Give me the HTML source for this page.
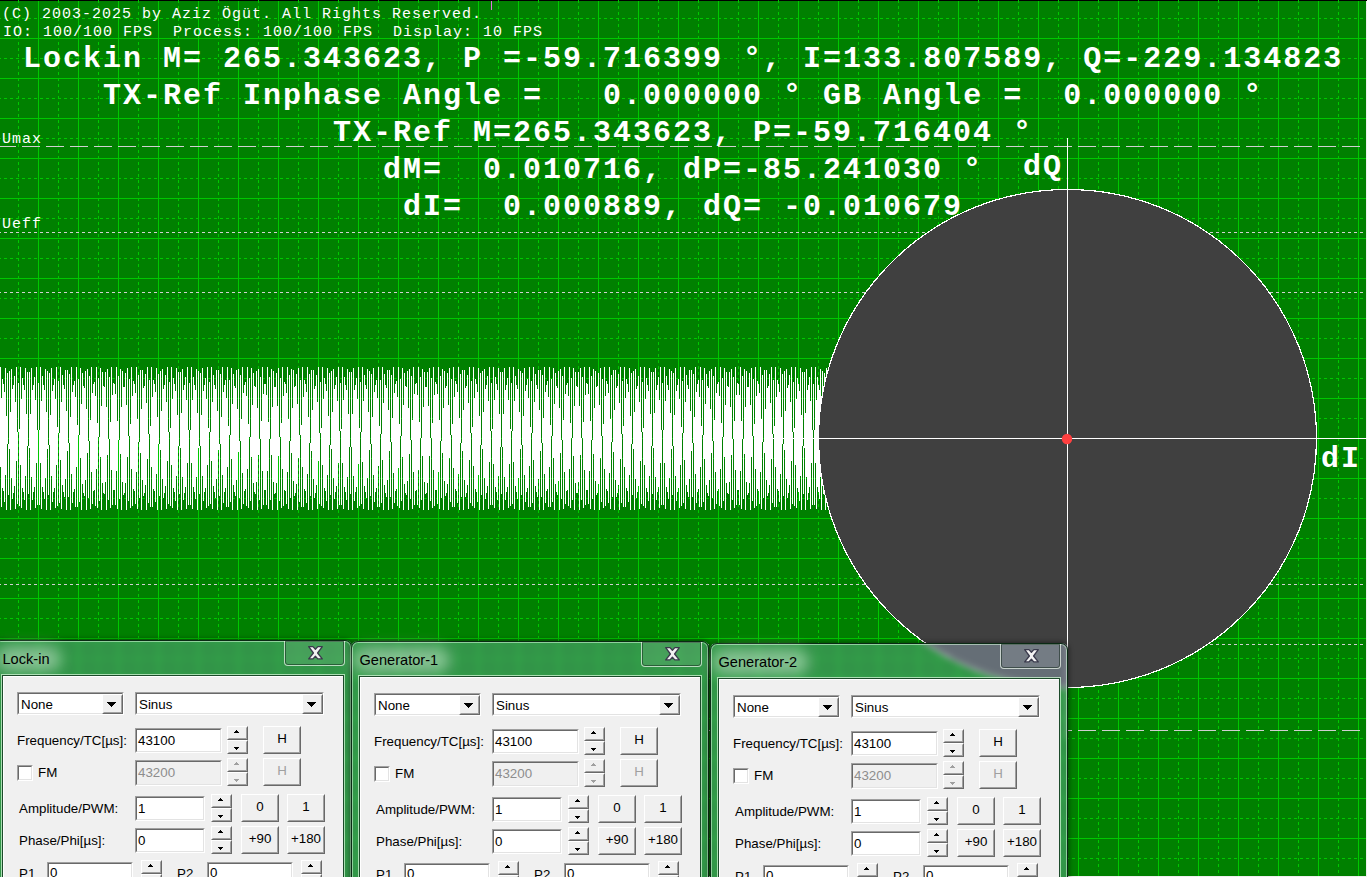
<!DOCTYPE html><html><head><meta charset="utf-8"><style>
html,body{margin:0;padding:0;width:1367px;height:877px;overflow:hidden;background:#008000}
.bg{position:absolute;left:0;top:0}
.win{position:absolute;box-sizing:border-box;border-radius:7px 7px 0 0;box-shadow:0 0 5px 1px rgba(0,0,0,0.45)}
.glass{position:absolute;left:0;top:0}
.frame{position:absolute;left:0;top:0;right:0;bottom:0;border-radius:7px 7px 0 0;border:1px solid #0a2a14;
  box-shadow:inset 0 0 0 1px rgba(220,255,225,0.55)}
.glow{position:absolute;border-radius:13px;background:rgba(255,255,255,0.40);filter:blur(7px)}
.title{position:absolute;left:8.5px;top:11px;font-family:"Liberation Sans",sans-serif;font-size:14.6px;color:#000;line-height:17px;white-space:pre}
.close{position:absolute;left:290px;top:1px;width:61px;height:25px;box-sizing:border-box;border:1px solid rgba(235,245,235,0.7);border-top:none;border-radius:0 0 4px 4px;
  box-shadow:inset 0 0 0 1px rgba(20,40,30,0.55);background:rgba(255,255,255,0.10)}
.close svg{position:absolute;left:21px;top:4px}
.client{position:absolute;left:9px;top:36px;width:340px;height:900px;background:#f0f0f0;box-sizing:border-box;border-left:1px solid #fff;border-top:1px solid #fff;
  box-shadow:0 0 0 1px #1c4a2a, 0 0 0 2px rgba(200,240,205,0.8)}
.sk{position:absolute;box-sizing:border-box;border-style:solid;border-width:1px;border-color:#a0a0a0 #fff #fff #a0a0a0}
.ski{position:absolute;left:0;top:0;right:0;bottom:0;border-style:solid;border-width:1px;border-color:#696969 #e3e3e3 #e3e3e3 #696969}
.rs{position:absolute;box-sizing:border-box;border-style:solid;border-width:1px;border-color:#fff #696969 #696969 #fff;background:#f0f0f0}
.rsi{position:absolute;left:0;top:0;right:0;bottom:0;border-style:solid;border-width:1px;border-color:#f0f0f0 #a0a0a0 #a0a0a0 #f0f0f0}
.lb{position:absolute;font-family:"Liberation Sans",sans-serif;white-space:pre;line-height:1.149}
.px{position:absolute;height:1px}
</style></head><body><svg class="bg" width="1367" height="877" viewBox="0 0 1367 877" shape-rendering="crispEdges">
<rect x="0" y="0" width="1367" height="877" fill="#008000"/>
<rect x="0" y="0" width="1367" height="1" fill="#000"/>
<rect x="1366" y="1" width="1" height="876" fill="#f0f0f0"/>
<rect x="0" y="876" width="1367" height="1" fill="#f0f0f0"/>
<g id="grid"><line x1="18.5" y1="0" x2="18.5" y2="876" stroke="#00c800" stroke-dasharray="3 3"/><line x1="58.5" y1="0" x2="58.5" y2="876" stroke="#00c800" stroke-dasharray="3 3"/><line x1="98.5" y1="0" x2="98.5" y2="876" stroke="#00c800" stroke-dasharray="3 3"/><line x1="138.5" y1="0" x2="138.5" y2="876" stroke="#00c800" stroke-dasharray="3 3"/><line x1="178.5" y1="0" x2="178.5" y2="876" stroke="#00c800" stroke-dasharray="3 3"/><line x1="218.5" y1="0" x2="218.5" y2="876" stroke="#00c800" stroke-dasharray="3 3"/><line x1="258.5" y1="0" x2="258.5" y2="876" stroke="#00c800" stroke-dasharray="3 3"/><line x1="298.5" y1="0" x2="298.5" y2="876" stroke="#00c800" stroke-dasharray="3 3"/><line x1="338.5" y1="0" x2="338.5" y2="876" stroke="#00c800" stroke-dasharray="3 3"/><line x1="378.5" y1="0" x2="378.5" y2="876" stroke="#00c800" stroke-dasharray="3 3"/><line x1="418.5" y1="0" x2="418.5" y2="876" stroke="#00c800" stroke-dasharray="3 3"/><line x1="458.5" y1="0" x2="458.5" y2="876" stroke="#00c800" stroke-dasharray="3 3"/><line x1="498.5" y1="0" x2="498.5" y2="876" stroke="#00c800" stroke-dasharray="3 3"/><line x1="538.5" y1="0" x2="538.5" y2="876" stroke="#00c800" stroke-dasharray="3 3"/><line x1="578.5" y1="0" x2="578.5" y2="876" stroke="#00c800" stroke-dasharray="3 3"/><line x1="618.5" y1="0" x2="618.5" y2="876" stroke="#00c800" stroke-dasharray="3 3"/><line x1="658.5" y1="0" x2="658.5" y2="876" stroke="#00c800" stroke-dasharray="3 3"/><line x1="698.5" y1="0" x2="698.5" y2="876" stroke="#00c800" stroke-dasharray="3 3"/><line x1="738.5" y1="0" x2="738.5" y2="876" stroke="#00c800" stroke-dasharray="3 3"/><line x1="778.5" y1="0" x2="778.5" y2="876" stroke="#00c800" stroke-dasharray="3 3"/><line x1="818.5" y1="0" x2="818.5" y2="876" stroke="#00c800" stroke-dasharray="3 3"/><line x1="858.5" y1="0" x2="858.5" y2="876" stroke="#00c800" stroke-dasharray="3 3"/><line x1="898.5" y1="0" x2="898.5" y2="876" stroke="#00c800" stroke-dasharray="3 3"/><line x1="938.5" y1="0" x2="938.5" y2="876" stroke="#00c800" stroke-dasharray="3 3"/><line x1="978.5" y1="0" x2="978.5" y2="876" stroke="#00c800" stroke-dasharray="3 3"/><line x1="1018.5" y1="0" x2="1018.5" y2="876" stroke="#00c800" stroke-dasharray="3 3"/><line x1="1058.5" y1="0" x2="1058.5" y2="876" stroke="#00c800" stroke-dasharray="3 3"/><line x1="1098.5" y1="0" x2="1098.5" y2="876" stroke="#00c800" stroke-dasharray="3 3"/><line x1="1138.5" y1="0" x2="1138.5" y2="876" stroke="#00c800" stroke-dasharray="3 3"/><line x1="1178.5" y1="0" x2="1178.5" y2="876" stroke="#00c800" stroke-dasharray="3 3"/><line x1="1218.5" y1="0" x2="1218.5" y2="876" stroke="#00c800" stroke-dasharray="3 3"/><line x1="1258.5" y1="0" x2="1258.5" y2="876" stroke="#00c800" stroke-dasharray="3 3"/><line x1="1298.5" y1="0" x2="1298.5" y2="876" stroke="#00c800" stroke-dasharray="3 3"/><line x1="1338.5" y1="0" x2="1338.5" y2="876" stroke="#00c800" stroke-dasharray="3 3"/><line x1="-2" y1="18.5" x2="1366" y2="18.5" stroke="#00c800" stroke-dasharray="3 3"/><line x1="-2" y1="58.5" x2="1366" y2="58.5" stroke="#00c800" stroke-dasharray="3 3"/><line x1="-2" y1="98.5" x2="1366" y2="98.5" stroke="#00c800" stroke-dasharray="3 3"/><line x1="-2" y1="138.5" x2="1366" y2="138.5" stroke="#00c800" stroke-dasharray="3 3"/><line x1="-2" y1="178.5" x2="1366" y2="178.5" stroke="#00c800" stroke-dasharray="3 3"/><line x1="-2" y1="218.5" x2="1366" y2="218.5" stroke="#00c800" stroke-dasharray="3 3"/><line x1="-2" y1="258.5" x2="1366" y2="258.5" stroke="#00c800" stroke-dasharray="3 3"/><line x1="-2" y1="298.5" x2="1366" y2="298.5" stroke="#00c800" stroke-dasharray="3 3"/><line x1="-2" y1="338.5" x2="1366" y2="338.5" stroke="#00c800" stroke-dasharray="3 3"/><line x1="-2" y1="378.5" x2="1366" y2="378.5" stroke="#00c800" stroke-dasharray="3 3"/><line x1="-2" y1="418.5" x2="1366" y2="418.5" stroke="#00c800" stroke-dasharray="3 3"/><line x1="-2" y1="458.5" x2="1366" y2="458.5" stroke="#00c800" stroke-dasharray="3 3"/><line x1="-2" y1="498.5" x2="1366" y2="498.5" stroke="#00c800" stroke-dasharray="3 3"/><line x1="-2" y1="538.5" x2="1366" y2="538.5" stroke="#00c800" stroke-dasharray="3 3"/><line x1="-2" y1="578.5" x2="1366" y2="578.5" stroke="#00c800" stroke-dasharray="3 3"/><line x1="-2" y1="618.5" x2="1366" y2="618.5" stroke="#00c800" stroke-dasharray="3 3"/><line x1="-2" y1="658.5" x2="1366" y2="658.5" stroke="#00c800" stroke-dasharray="3 3"/><line x1="-2" y1="698.5" x2="1366" y2="698.5" stroke="#00c800" stroke-dasharray="3 3"/><line x1="-2" y1="738.5" x2="1366" y2="738.5" stroke="#00c800" stroke-dasharray="3 3"/><line x1="-2" y1="778.5" x2="1366" y2="778.5" stroke="#00c800" stroke-dasharray="3 3"/><line x1="-2" y1="818.5" x2="1366" y2="818.5" stroke="#00c800" stroke-dasharray="3 3"/><line x1="-2" y1="858.5" x2="1366" y2="858.5" stroke="#00c800" stroke-dasharray="3 3"/><rect x="38" y="1" width="1" height="875" fill="#00c800"/><rect x="78" y="1" width="1" height="875" fill="#00c800"/><rect x="118" y="1" width="1" height="875" fill="#00c800"/><rect x="158" y="1" width="1" height="875" fill="#00c800"/><rect x="198" y="1" width="1" height="875" fill="#00c800"/><rect x="238" y="1" width="1" height="875" fill="#00c800"/><rect x="278" y="1" width="1" height="875" fill="#00c800"/><rect x="318" y="1" width="1" height="875" fill="#00c800"/><rect x="358" y="1" width="1" height="875" fill="#00c800"/><rect x="398" y="1" width="1" height="875" fill="#00c800"/><rect x="438" y="1" width="1" height="875" fill="#00c800"/><rect x="478" y="1" width="1" height="875" fill="#00c800"/><rect x="518" y="1" width="1" height="875" fill="#00c800"/><rect x="558" y="1" width="1" height="875" fill="#00c800"/><rect x="598" y="1" width="1" height="875" fill="#00c800"/><rect x="638" y="1" width="1" height="875" fill="#00c800"/><rect x="678" y="1" width="1" height="875" fill="#00c800"/><rect x="718" y="1" width="1" height="875" fill="#00c800"/><rect x="758" y="1" width="1" height="875" fill="#00c800"/><rect x="798" y="1" width="1" height="875" fill="#00c800"/><rect x="838" y="1" width="1" height="875" fill="#00c800"/><rect x="878" y="1" width="1" height="875" fill="#00c800"/><rect x="918" y="1" width="1" height="875" fill="#00c800"/><rect x="958" y="1" width="1" height="875" fill="#00c800"/><rect x="998" y="1" width="1" height="875" fill="#00c800"/><rect x="1038" y="1" width="1" height="875" fill="#00c800"/><rect x="1078" y="1" width="1" height="875" fill="#00c800"/><rect x="1118" y="1" width="1" height="875" fill="#00c800"/><rect x="1158" y="1" width="1" height="875" fill="#00c800"/><rect x="1198" y="1" width="1" height="875" fill="#00c800"/><rect x="1238" y="1" width="1" height="875" fill="#00c800"/><rect x="1278" y="1" width="1" height="875" fill="#00c800"/><rect x="1318" y="1" width="1" height="875" fill="#00c800"/><rect x="1358" y="1" width="1" height="875" fill="#00c800"/><rect x="0" y="38" width="1366" height="1" fill="#00c800"/><rect x="0" y="78" width="1366" height="1" fill="#00c800"/><rect x="0" y="118" width="1366" height="1" fill="#00c800"/><rect x="0" y="158" width="1366" height="1" fill="#00c800"/><rect x="0" y="198" width="1366" height="1" fill="#00c800"/><rect x="0" y="238" width="1366" height="1" fill="#00c800"/><rect x="0" y="278" width="1366" height="1" fill="#00c800"/><rect x="0" y="318" width="1366" height="1" fill="#00c800"/><rect x="0" y="358" width="1366" height="1" fill="#00c800"/><rect x="0" y="398" width="1366" height="1" fill="#00c800"/><rect x="0" y="438" width="1366" height="1" fill="#00c800"/><rect x="0" y="478" width="1366" height="1" fill="#00c800"/><rect x="0" y="518" width="1366" height="1" fill="#00c800"/><rect x="0" y="558" width="1366" height="1" fill="#00c800"/><rect x="0" y="598" width="1366" height="1" fill="#00c800"/><rect x="0" y="638" width="1366" height="1" fill="#00c800"/><rect x="0" y="678" width="1366" height="1" fill="#00c800"/><rect x="0" y="718" width="1366" height="1" fill="#00c800"/><rect x="0" y="758" width="1366" height="1" fill="#00c800"/><rect x="0" y="798" width="1366" height="1" fill="#00c800"/><rect x="0" y="838" width="1366" height="1" fill="#00c800"/></g>
<g id="levels">
<line x1="-2" y1="146.5" x2="1366" y2="146.5" stroke="#d0d0d0" stroke-dasharray="18 6"/>
<line x1="-2" y1="232.5" x2="1366" y2="232.5" stroke="#d0d0d0" stroke-dasharray="3 3"/>
<line x1="-2" y1="292.5" x2="1366" y2="292.5" stroke="#d0d0d0" stroke-dasharray="3 3"/>
<line x1="-2" y1="584.5" x2="1366" y2="584.5" stroke="#d0d0d0" stroke-dasharray="3 3"/>
<line x1="-2" y1="644.5" x2="1366" y2="644.5" stroke="#d0d0d0" stroke-dasharray="3 3"/>
<line x1="-2" y1="730.5" x2="1366" y2="730.5" stroke="#d0d0d0" stroke-dasharray="18 6"/>
</g>
<path d="M0 367h1v100h-1zM1 398h1v109h-1zM2 379h1v109h-1zM3 384h1v107h-1zM4 392h1v110h-1zM5 368h1v107h-1zM6 416h1v94h-1zM7 373h1v71h-1zM8 444h1v51h-1zM9 371h1v78h-1zM10 412h1v98h-1zM11 369h1v109h-1zM12 389h1v110h-1zM13 385h1v108h-1zM14 376h1v110h-1zM15 402h1v107h-1zM16 367h1v94h-1zM17 432h1v72h-1zM18 383h1v49h-1zM19 429h1v77h-1zM20 367h1v98h-1zM21 399h1v109h-1zM22 378h1v110h-1zM23 385h1v107h-1zM24 390h1v110h-1zM25 368h1v108h-1zM26 414h1v96h-1zM27 372h1v74h-1zM28 446h1v48h-1zM29 372h1v76h-1zM30 414h1v96h-1zM31 368h1v109h-1zM32 390h1v110h-1zM33 385h1v107h-1zM34 377h1v110h-1zM35 400h1v108h-1zM36 367h1v96h-1zM37 430h1v75h-1zM38 383h1v47h-1zM39 430h1v75h-1zM40 367h1v96h-1zM41 401h1v108h-1zM42 376h1v111h-1zM43 385h1v107h-1zM44 390h1v109h-1zM45 369h1v109h-1zM46 412h1v98h-1zM47 371h1v78h-1zM48 445h1v50h-1zM49 373h1v72h-1zM50 415h1v95h-1zM51 368h1v108h-1zM52 391h1v111h-1zM53 385h1v107h-1zM54 379h1v109h-1zM55 399h1v109h-1zM56 367h1v98h-1zM57 427h1v79h-1zM58 381h1v52h-1zM59 433h1v70h-1zM60 367h1v93h-1zM61 402h1v107h-1zM62 375h1v110h-1zM63 385h1v107h-1zM64 389h1v108h-1zM65 370h1v109h-1zM66 411h1v99h-1zM67 370h1v81h-1zM68 443h1v54h-1zM69 374h1v69h-1zM70 417h1v93h-1zM71 367h1v107h-1zM72 392h1v111h-1zM73 385h1v107h-1zM74 381h1v108h-1zM75 397h1v110h-1zM76 367h1v100h-1zM77 425h1v82h-1zM78 379h1v56h-1zM79 435h1v67h-1zM80 368h1v90h-1zM81 404h1v106h-1zM82 373h1v111h-1zM83 386h1v107h-1zM84 388h1v108h-1zM85 371h1v109h-1zM86 409h1v101h-1zM87 369h1v84h-1zM88 441h1v57h-1zM89 376h1v65h-1zM90 420h1v89h-1zM91 367h1v105h-1zM92 393h1v111h-1zM93 384h1v107h-1zM94 382h1v108h-1zM95 396h1v110h-1zM96 367h1v102h-1zM97 423h1v85h-1zM98 378h1v59h-1zM99 437h1v64h-1zM100 368h1v89h-1zM101 406h1v104h-1zM102 372h1v111h-1zM103 386h1v107h-1zM104 387h1v107h-1zM105 372h1v110h-1zM106 407h1v103h-1zM107 369h1v86h-1zM108 439h1v61h-1zM109 377h1v62h-1zM110 422h1v86h-1zM111 367h1v103h-1zM112 395h1v110h-1zM113 383h1v107h-1zM114 384h1v106h-1zM115 394h1v111h-1zM116 367h1v104h-1zM117 421h1v88h-1zM118 376h1v64h-1zM119 440h1v59h-1zM120 369h1v85h-1zM121 407h1v103h-1zM122 371h1v111h-1zM123 387h1v108h-1zM124 387h1v106h-1zM125 373h1v110h-1zM126 405h1v105h-1zM127 368h1v89h-1zM128 436h1v65h-1zM129 379h1v57h-1zM130 424h1v84h-1zM131 367h1v102h-1zM132 396h1v110h-1zM133 381h1v108h-1zM134 384h1v107h-1zM135 393h1v111h-1zM136 367h1v105h-1zM137 419h1v90h-1zM138 375h1v67h-1zM139 442h1v56h-1zM140 370h1v83h-1zM141 409h1v101h-1zM142 370h1v110h-1zM143 388h1v108h-1zM144 386h1v107h-1zM145 374h1v111h-1zM146 403h1v107h-1zM147 367h1v92h-1zM148 434h1v69h-1zM149 380h1v54h-1zM150 426h1v81h-1zM151 367h1v100h-1zM152 397h1v110h-1zM153 380h1v109h-1zM154 384h1v107h-1zM155 392h1v110h-1zM156 368h1v106h-1zM157 417h1v93h-1zM158 374h1v70h-1zM159 444h1v52h-1zM160 371h1v79h-1zM161 411h1v99h-1zM162 369h1v110h-1zM163 389h1v109h-1zM164 385h1v108h-1zM165 375h1v111h-1zM166 402h1v107h-1zM167 367h1v94h-1zM168 432h1v72h-1zM169 382h1v50h-1zM170 428h1v78h-1zM171 367h1v98h-1zM172 399h1v109h-1zM173 378h1v110h-1zM174 384h1v108h-1zM175 391h1v110h-1zM176 368h1v108h-1zM177 415h1v95h-1zM178 372h1v74h-1zM179 446h1v48h-1zM180 372h1v76h-1zM181 413h1v97h-1zM182 369h1v108h-1zM183 390h1v110h-1zM184 385h1v108h-1zM185 377h1v110h-1zM186 400h1v109h-1zM187 367h1v96h-1zM188 430h1v75h-1zM189 383h1v47h-1zM190 430h1v75h-1zM191 367h1v96h-1zM192 400h1v109h-1zM193 377h1v110h-1zM194 385h1v107h-1zM195 390h1v109h-1zM196 369h1v108h-1zM197 413h1v97h-1zM198 371h1v77h-1zM199 446h1v48h-1zM200 373h1v73h-1zM201 415h1v95h-1zM202 368h1v108h-1zM203 391h1v110h-1zM204 385h1v107h-1zM205 378h1v110h-1zM206 399h1v109h-1zM207 367h1v98h-1zM208 428h1v78h-1zM209 382h1v50h-1zM210 432h1v72h-1zM211 367h1v94h-1zM212 402h1v107h-1zM213 375h1v111h-1zM214 385h1v107h-1zM215 389h1v109h-1zM216 370h1v109h-1zM217 411h1v99h-1zM218 370h1v80h-1zM219 444h1v52h-1zM220 374h1v70h-1zM221 417h1v93h-1zM222 367h1v108h-1zM223 392h1v111h-1zM224 385h1v107h-1zM225 380h1v108h-1zM226 398h1v109h-1zM227 367h1v100h-1zM228 426h1v81h-1zM229 380h1v55h-1zM230 435h1v67h-1zM231 368h1v91h-1zM232 404h1v106h-1zM233 374h1v111h-1zM234 386h1v106h-1zM235 388h1v108h-1zM236 370h1v110h-1zM237 409h1v101h-1zM238 369h1v83h-1zM239 441h1v57h-1zM240 375h1v66h-1zM241 419h1v90h-1zM242 367h1v106h-1zM243 393h1v111h-1zM244 385h1v106h-1zM245 382h1v107h-1zM246 396h1v110h-1zM247 367h1v102h-1zM248 424h1v84h-1zM249 378h1v59h-1zM250 437h1v64h-1zM251 368h1v89h-1zM252 405h1v105h-1zM253 373h1v110h-1zM254 386h1v106h-1zM255 387h1v107h-1zM256 371h1v111h-1zM257 408h1v102h-1zM258 369h1v86h-1zM259 439h1v61h-1zM260 377h1v62h-1zM261 421h1v88h-1zM262 367h1v104h-1zM263 394h1v111h-1zM264 384h1v106h-1zM265 384h1v106h-1zM266 395h1v110h-1zM267 367h1v104h-1zM268 422h1v87h-1zM269 377h1v62h-1zM270 439h1v61h-1zM271 369h1v86h-1zM272 407h1v103h-1zM273 371h1v111h-1zM274 387h1v107h-1zM275 387h1v106h-1zM276 373h1v110h-1zM277 406h1v104h-1zM278 368h1v88h-1zM279 437h1v64h-1zM280 378h1v59h-1zM281 423h1v85h-1zM282 367h1v102h-1zM283 396h1v110h-1zM284 382h1v108h-1zM285 384h1v107h-1zM286 393h1v111h-1zM287 367h1v105h-1zM288 419h1v90h-1zM289 375h1v66h-1zM290 441h1v57h-1zM291 369h1v84h-1zM292 408h1v102h-1zM293 370h1v111h-1zM294 387h1v109h-1zM295 386h1v107h-1zM296 374h1v110h-1zM297 404h1v106h-1zM298 368h1v90h-1zM299 435h1v67h-1zM300 380h1v55h-1zM301 425h1v82h-1zM302 367h1v100h-1zM303 397h1v110h-1zM304 380h1v109h-1zM305 384h1v107h-1zM306 392h1v111h-1zM307 367h1v107h-1zM308 417h1v93h-1zM309 374h1v69h-1zM310 443h1v53h-1zM311 370h1v81h-1zM312 410h1v100h-1zM313 370h1v109h-1zM314 389h1v109h-1zM315 386h1v107h-1zM316 375h1v110h-1zM317 402h1v107h-1zM318 367h1v94h-1zM319 433h1v71h-1zM320 382h1v51h-1zM321 428h1v78h-1zM322 367h1v98h-1zM323 399h1v109h-1zM324 378h1v110h-1zM325 384h1v107h-1zM326 391h1v110h-1zM327 368h1v107h-1zM328 416h1v94h-1zM329 373h1v72h-1zM330 445h1v50h-1zM331 371h1v78h-1zM332 412h1v98h-1zM333 369h1v109h-1zM334 389h1v110h-1zM335 385h1v107h-1zM336 377h1v109h-1zM337 401h1v108h-1zM338 367h1v96h-1zM339 431h1v74h-1zM340 383h1v48h-1zM341 429h1v76h-1zM342 367h1v96h-1zM343 400h1v109h-1zM344 377h1v110h-1zM345 385h1v107h-1zM346 390h1v110h-1zM347 369h1v108h-1zM348 414h1v96h-1zM349 372h1v75h-1zM350 447h1v47h-1zM351 372h1v75h-1zM352 414h1v96h-1zM353 368h1v108h-1zM354 390h1v111h-1zM355 385h1v107h-1zM356 378h1v109h-1zM357 399h1v109h-1zM358 367h1v97h-1zM359 428h1v78h-1zM360 382h1v50h-1zM361 432h1v72h-1zM362 367h1v95h-1zM363 401h1v108h-1zM364 375h1v111h-1zM365 385h1v107h-1zM366 389h1v109h-1zM367 369h1v109h-1zM368 412h1v98h-1zM369 371h1v79h-1zM370 444h1v52h-1zM371 374h1v70h-1zM372 417h1v93h-1zM373 368h1v107h-1zM374 392h1v110h-1zM375 385h1v107h-1zM376 380h1v108h-1zM377 398h1v109h-1zM378 367h1v99h-1zM379 426h1v81h-1zM380 380h1v54h-1zM381 434h1v69h-1zM382 367h1v93h-1zM383 403h1v107h-1zM384 374h1v111h-1zM385 385h1v108h-1zM386 388h1v109h-1zM387 370h1v110h-1zM388 410h1v100h-1zM389 370h1v81h-1zM390 442h1v55h-1zM391 375h1v67h-1zM392 418h1v91h-1zM393 367h1v106h-1zM394 393h1v110h-1zM395 384h1v107h-1zM396 381h1v108h-1zM397 397h1v109h-1zM398 367h1v101h-1zM399 424h1v84h-1zM400 379h1v57h-1zM401 436h1v65h-1zM402 368h1v89h-1zM403 405h1v105h-1zM404 373h1v111h-1zM405 386h1v107h-1zM406 387h1v108h-1zM407 371h1v110h-1zM408 408h1v102h-1zM409 369h1v85h-1zM410 440h1v59h-1zM411 376h1v64h-1zM412 420h1v89h-1zM413 367h1v105h-1zM414 394h1v111h-1zM415 384h1v107h-1zM416 383h1v107h-1zM417 395h1v110h-1zM418 367h1v103h-1zM419 422h1v86h-1zM420 377h1v61h-1zM421 438h1v62h-1zM422 369h1v87h-1zM423 407h1v103h-1zM424 372h1v110h-1zM425 387h1v107h-1zM426 387h1v106h-1zM427 372h1v111h-1zM428 406h1v104h-1zM429 368h1v88h-1zM430 438h1v63h-1zM431 378h1v60h-1zM432 423h1v85h-1zM433 367h1v103h-1zM434 395h1v111h-1zM435 382h1v108h-1zM436 384h1v106h-1zM437 394h1v110h-1zM438 367h1v105h-1zM439 420h1v89h-1zM440 376h1v65h-1zM441 441h1v57h-1zM442 369h1v84h-1zM443 408h1v102h-1zM444 371h1v110h-1zM445 388h1v108h-1zM446 386h1v107h-1zM447 373h1v111h-1zM448 405h1v105h-1zM449 368h1v90h-1zM450 435h1v67h-1zM451 379h1v56h-1zM452 424h1v83h-1zM453 367h1v101h-1zM454 397h1v110h-1zM455 381h1v108h-1zM456 384h1v107h-1zM457 392h1v111h-1zM458 367h1v107h-1zM459 418h1v92h-1zM460 374h1v69h-1zM461 443h1v54h-1zM462 370h1v81h-1zM463 410h1v100h-1zM464 370h1v110h-1zM465 388h1v109h-1zM466 386h1v107h-1zM467 375h1v110h-1zM468 403h1v106h-1zM469 367h1v93h-1zM470 433h1v70h-1zM471 381h1v52h-1zM472 427h1v79h-1zM473 367h1v99h-1zM474 398h1v110h-1zM475 379h1v110h-1zM476 384h1v108h-1zM477 392h1v110h-1zM478 368h1v107h-1zM479 416h1v94h-1zM480 373h1v72h-1zM481 445h1v50h-1zM482 371h1v78h-1zM483 412h1v98h-1zM484 369h1v109h-1zM485 389h1v110h-1zM486 385h1v108h-1zM487 376h1v110h-1zM488 401h1v108h-1zM489 367h1v95h-1zM490 431h1v74h-1zM491 383h1v48h-1zM492 429h1v76h-1zM493 367h1v97h-1zM494 400h1v108h-1zM495 377h1v110h-1zM496 384h1v108h-1zM497 390h1v110h-1zM498 368h1v108h-1zM499 414h1v96h-1zM500 372h1v75h-1zM501 447h1v47h-1zM502 372h1v75h-1zM503 414h1v96h-1zM504 368h1v109h-1zM505 390h1v110h-1zM506 385h1v107h-1zM507 378h1v109h-1zM508 400h1v108h-1zM509 367h1v97h-1zM510 429h1v77h-1zM511 383h1v48h-1zM512 431h1v73h-1zM513 367h1v95h-1zM514 401h1v108h-1zM515 376h1v110h-1zM516 385h1v107h-1zM517 389h1v110h-1zM518 369h1v109h-1zM519 412h1v98h-1zM520 371h1v78h-1zM521 445h1v50h-1zM522 373h1v72h-1zM523 416h1v94h-1zM524 368h1v107h-1zM525 391h1v111h-1zM526 385h1v107h-1zM527 379h1v109h-1zM528 398h1v109h-1zM529 367h1v99h-1zM530 427h1v80h-1zM531 381h1v52h-1zM532 433h1v70h-1zM533 367h1v93h-1zM534 402h1v108h-1zM535 374h1v112h-1zM536 385h1v107h-1zM537 389h1v108h-1zM538 370h1v109h-1zM539 410h1v100h-1zM540 370h1v81h-1zM541 443h1v54h-1zM542 375h1v68h-1zM543 418h1v92h-1zM544 367h1v107h-1zM545 392h1v111h-1zM546 385h1v106h-1zM547 381h1v108h-1zM548 397h1v110h-1zM549 367h1v100h-1zM550 425h1v82h-1zM551 379h1v57h-1zM552 436h1v66h-1zM553 368h1v90h-1zM554 404h1v106h-1zM555 373h1v111h-1zM556 386h1v106h-1zM557 388h1v107h-1zM558 371h1v110h-1zM559 408h1v102h-1zM560 369h1v84h-1zM561 440h1v59h-1zM562 376h1v64h-1zM563 420h1v89h-1zM564 367h1v105h-1zM565 394h1v110h-1zM566 385h1v106h-1zM567 383h1v107h-1zM568 396h1v110h-1zM569 367h1v102h-1zM570 423h1v85h-1zM571 378h1v60h-1zM572 438h1v62h-1zM573 368h1v88h-1zM574 406h1v104h-1zM575 372h1v111h-1zM576 386h1v107h-1zM577 387h1v106h-1zM578 372h1v110h-1zM579 406h1v104h-1zM580 368h1v87h-1zM581 438h1v62h-1zM582 377h1v61h-1zM583 422h1v86h-1zM584 367h1v103h-1zM585 395h1v110h-1zM586 383h1v107h-1zM587 384h1v106h-1zM588 394h1v110h-1zM589 367h1v104h-1zM590 421h1v88h-1zM591 376h1v64h-1zM592 440h1v59h-1zM593 369h1v85h-1zM594 408h1v102h-1zM595 371h1v110h-1zM596 387h1v108h-1zM597 386h1v107h-1zM598 373h1v111h-1zM599 405h1v105h-1zM600 368h1v90h-1zM601 436h1v66h-1zM602 379h1v57h-1zM603 424h1v84h-1zM604 367h1v102h-1zM605 396h1v110h-1zM606 381h1v108h-1zM607 384h1v107h-1zM608 393h1v110h-1zM609 367h1v106h-1zM610 419h1v90h-1zM611 375h1v67h-1zM612 442h1v55h-1zM613 370h1v82h-1zM614 410h1v100h-1zM615 370h1v110h-1zM616 388h1v109h-1zM617 386h1v107h-1zM618 374h1v111h-1zM619 403h1v107h-1zM620 367h1v92h-1zM621 434h1v69h-1zM622 381h1v53h-1zM623 426h1v81h-1zM624 367h1v100h-1zM625 398h1v109h-1zM626 379h1v109h-1zM627 384h1v107h-1zM628 392h1v110h-1zM629 368h1v107h-1zM630 416h1v94h-1zM631 373h1v71h-1zM632 444h1v51h-1zM633 371h1v78h-1zM634 412h1v98h-1zM635 369h1v110h-1zM636 389h1v109h-1zM637 386h1v106h-1zM638 376h1v110h-1zM639 402h1v107h-1zM640 367h1v94h-1zM641 432h1v72h-1zM642 382h1v50h-1zM643 428h1v78h-1zM644 367h1v98h-1zM645 399h1v109h-1zM646 378h1v110h-1zM647 385h1v107h-1zM648 391h1v110h-1zM649 368h1v108h-1zM650 414h1v96h-1zM651 372h1v74h-1zM652 446h1v48h-1zM653 372h1v76h-1zM654 413h1v97h-1zM655 368h1v109h-1zM656 390h1v110h-1zM657 385h1v107h-1zM658 377h1v110h-1zM659 400h1v108h-1zM660 367h1v96h-1zM661 430h1v75h-1zM662 383h1v47h-1zM663 430h1v75h-1zM664 367h1v96h-1zM665 401h1v108h-1zM666 376h1v111h-1zM667 385h1v107h-1zM668 390h1v109h-1zM669 369h1v109h-1zM670 413h1v97h-1zM671 371h1v78h-1zM672 446h1v49h-1zM673 373h1v73h-1zM674 415h1v95h-1zM675 368h1v108h-1zM676 391h1v110h-1zM677 385h1v107h-1zM678 379h1v109h-1zM679 399h1v109h-1zM680 367h1v98h-1zM681 427h1v79h-1zM682 381h1v52h-1zM683 433h1v70h-1zM684 367h1v93h-1zM685 402h1v107h-1zM686 375h1v110h-1zM687 385h1v107h-1zM688 389h1v108h-1zM689 370h1v109h-1zM690 411h1v99h-1zM691 370h1v81h-1zM692 443h1v54h-1zM693 374h1v69h-1zM694 417h1v93h-1zM695 367h1v107h-1zM696 392h1v111h-1zM697 384h1v108h-1zM698 380h1v109h-1zM699 397h1v110h-1zM700 367h1v100h-1zM701 426h1v81h-1zM702 380h1v55h-1zM703 435h1v67h-1zM704 368h1v91h-1zM705 404h1v106h-1zM706 374h1v111h-1zM707 386h1v107h-1zM708 388h1v108h-1zM709 371h1v109h-1zM710 409h1v101h-1zM711 369h1v84h-1zM712 441h1v57h-1zM713 376h1v65h-1zM714 420h1v89h-1zM715 367h1v105h-1zM716 393h1v111h-1zM717 384h1v107h-1zM718 382h1v107h-1zM719 396h1v110h-1zM720 367h1v102h-1zM721 423h1v85h-1zM722 378h1v59h-1zM723 437h1v64h-1zM724 368h1v89h-1zM725 405h1v105h-1zM726 372h1v111h-1zM727 386h1v107h-1zM728 387h1v107h-1zM729 372h1v110h-1zM730 407h1v103h-1zM731 369h1v86h-1zM732 439h1v61h-1zM733 377h1v62h-1zM734 421h1v87h-1zM735 367h1v103h-1zM736 395h1v110h-1zM737 383h1v107h-1zM738 384h1v106h-1zM739 395h1v110h-1zM740 367h1v104h-1zM741 421h1v88h-1zM742 376h1v63h-1zM743 439h1v60h-1zM744 369h1v85h-1zM745 407h1v103h-1zM746 371h1v111h-1zM747 387h1v108h-1zM748 387h1v106h-1zM749 373h1v110h-1zM750 405h1v105h-1zM751 368h1v89h-1zM752 436h1v65h-1zM753 379h1v57h-1zM754 424h1v84h-1zM755 367h1v102h-1zM756 396h1v110h-1zM757 381h1v108h-1zM758 384h1v107h-1zM759 393h1v111h-1zM760 367h1v105h-1zM761 419h1v90h-1zM762 375h1v67h-1zM763 442h1v56h-1zM764 370h1v83h-1zM765 409h1v101h-1zM766 370h1v110h-1zM767 388h1v108h-1zM768 386h1v107h-1zM769 374h1v111h-1zM770 403h1v107h-1zM771 367h1v92h-1zM772 434h1v69h-1zM773 380h1v54h-1zM774 426h1v81h-1zM775 367h1v100h-1zM776 397h1v110h-1zM777 380h1v109h-1zM778 384h1v107h-1zM779 392h1v110h-1zM780 368h1v106h-1zM781 417h1v93h-1zM782 374h1v70h-1zM783 444h1v52h-1zM784 371h1v79h-1zM785 411h1v99h-1zM786 369h1v110h-1zM787 388h1v110h-1zM788 385h1v108h-1zM789 375h1v110h-1zM790 402h1v107h-1zM791 367h1v94h-1zM792 432h1v72h-1zM793 382h1v50h-1zM794 428h1v78h-1zM795 367h1v98h-1zM796 399h1v109h-1zM797 378h1v110h-1zM798 384h1v108h-1zM799 391h1v110h-1zM800 368h1v108h-1zM801 415h1v95h-1zM802 372h1v74h-1zM803 446h1v48h-1zM804 372h1v76h-1zM805 413h1v97h-1zM806 369h1v108h-1zM807 390h1v110h-1zM808 385h1v108h-1zM809 377h1v110h-1zM810 401h1v108h-1zM811 367h1v96h-1zM812 430h1v75h-1zM813 384h1v46h-1zM814 430h1v75h-1zM815 367h1v96h-1zM816 400h1v109h-1zM817 377h1v110h-1zM818 385h1v107h-1zM819 390h1v109h-1zM820 369h1v108h-1zM821 413h1v97h-1zM822 371h1v77h-1zM823 446h1v48h-1zM824 373h1v73h-1zM825 415h1v95h-1zM826 368h1v108h-1zM827 391h1v110h-1zM828 385h1v107h-1zM829 378h1v110h-1zM830 399h1v109h-1zM831 367h1v98h-1zM832 428h1v78h-1zM833 382h1v50h-1zM834 432h1v72h-1zM835 367h1v94h-1zM836 402h1v107h-1zM837 375h1v111h-1zM838 385h1v107h-1zM839 389h1v109h-1zM840 370h1v109h-1zM841 411h1v99h-1zM842 370h1v80h-1zM843 444h1v52h-1zM844 374h1v70h-1z" fill="#fff"/>
<g id="circ"><circle cx="1067.5" cy="438.5" r="249" fill="#404040" stroke="#fff" stroke-width="1.2" shape-rendering="crispEdges"/><rect x="1067" y="138" width="1" height="601" fill="#fff"/></g>
<rect x="767" y="438" width="600" height="1" fill="#fff"/>
<circle cx="1067" cy="439" r="5.2" fill="#ff4040" shape-rendering="geometricPrecision"/>
<rect x="491" y="1" width="1" height="9" fill="#e070e0"/>
<text x="2" y="18" font-family="Liberation Mono" font-size="15" font-weight="normal" letter-spacing="1.0" fill="#fff" xml:space="preserve" shape-rendering="auto" >(C) 2003-2025 by Aziz Ögüt. All Rights Reserved.</text>
<text x="3" y="36" font-family="Liberation Mono" font-size="15" font-weight="normal" letter-spacing="1.0" fill="#fff" xml:space="preserve" shape-rendering="auto" >IO: 100/100 FPS  Process: 100/100 FPS  Display: 10 FPS</text>
<text x="2" y="143" font-family="Liberation Mono" font-size="15" font-weight="normal" letter-spacing="1.0" fill="#fff" xml:space="preserve" shape-rendering="auto" >Umax</text>
<text x="2" y="228" font-family="Liberation Mono" font-size="15" font-weight="normal" letter-spacing="1.0" fill="#fff" xml:space="preserve" shape-rendering="auto" >Ueff</text>
<text x="23" y="67" font-family="Liberation Mono" font-size="30" font-weight="bold" letter-spacing="2.0" fill="#fff" xml:space="preserve" shape-rendering="auto" >Lockin M= 265.343623, P =-59.716399 °, I=133.807589, Q=-229.134823</text>
<text x="103" y="104" font-family="Liberation Mono" font-size="30" font-weight="bold" letter-spacing="2.0" fill="#fff" xml:space="preserve" shape-rendering="auto" >TX-Ref Inphase Angle =   0.000000 ° GB Angle =  0.000000 °</text>
<text x="333" y="141" font-family="Liberation Mono" font-size="30" font-weight="bold" letter-spacing="2.0" fill="#fff" xml:space="preserve" shape-rendering="auto" >TX-Ref M=265.343623, P=-59.716404 °</text>
<text x="383" y="178" font-family="Liberation Mono" font-size="30" font-weight="bold" letter-spacing="2.0" fill="#fff" xml:space="preserve" shape-rendering="auto" >dM=  0.010716, dP=-85.241030 °</text>
<text x="403" y="215" font-family="Liberation Mono" font-size="30" font-weight="bold" letter-spacing="2.0" fill="#fff" xml:space="preserve" shape-rendering="auto" >dI=  0.000889, dQ= -0.010679</text>
<text x="1023" y="175" font-family="Liberation Mono" font-size="30" font-weight="bold" letter-spacing="2.0" fill="#fff" xml:space="preserve" shape-rendering="auto" >dQ</text>
<text x="1321" y="467" font-family="Liberation Mono" font-size="30" font-weight="bold" letter-spacing="2.0" fill="#fff" xml:space="preserve" shape-rendering="auto" >dI</text>
</svg><div class="win" style="left:-6px;top:640px;width:358px;height:257px;"><svg class="glass" width="358" height="247" viewBox="0 0 358 247"><defs><clipPath id="cg4"><path d="M0 7 Q0 0 7 0 H351 Q358 0 358 7 V247 H0 Z M9 36 H349 V247 H9 Z" clip-rule="evenodd"/></clipPath><filter id="fg4" color-interpolation-filters="sRGB" filterUnits="userSpaceOnUse" x="-50" y="-50" width="458" height="347"><feGaussianBlur stdDeviation="3.2" edgeMode="duplicate"/><feColorMatrix type="matrix" values="0.80 0 0 0 0.196  0 0.60 0 0 0.282  0 0 0.72 0 0.282  0 0 0 1 0"/></filter></defs><g clip-path="url(#cg4)"><g filter="url(#fg4)"><g transform="translate(6,-640)"><rect x="-46" y="600" width="438" height="327" fill="#008000"/><use href="#grid"/><use href="#circ"/></g></g></g></svg><div class="frame"></div><div class="glow" style="left:2px;top:6px;width:65px;height:26px"></div><div class="title">Lock-in</div><div class="close"><svg width="20" height="18" viewBox="0 0 20 18"><path d="M2.7 1.6H7L9.4 4.3L11.8 1.6H16.3L11.6 8L16.3 13.9H11.8L9.4 11.2L7 13.9H2.7L7.4 8Z" fill="#f2f2f2" stroke="#3a3a4c" stroke-width="1.3" stroke-linejoin="round"/></svg></div><div class="client"><div class="sk" style="left:13px;top:15px;width:107px;height:23px;"><div class="ski" style="background:#fff"></div></div><div class="rs" style="left:98px;top:17px;width:21px;height:20px;"><div class="rsi"></div></div><div class="px" style="left:103px;top:25px;width:9px;background:#000"></div><div class="px" style="left:104px;top:26px;width:7px;background:#000"></div><div class="px" style="left:105px;top:27px;width:5px;background:#000"></div><div class="px" style="left:106px;top:28px;width:3px;background:#000"></div><div class="px" style="left:107px;top:29px;width:1px;background:#000"></div><div class="lb" style="left:17px;top:19.93px;font-size:13.33px;color:#000;">None</div><div class="sk" style="left:131px;top:15px;width:189px;height:23px;"><div class="ski" style="background:#fff"></div></div><div class="rs" style="left:298px;top:17px;width:21px;height:20px;"><div class="rsi"></div></div><div class="px" style="left:303px;top:25px;width:9px;background:#000"></div><div class="px" style="left:304px;top:26px;width:7px;background:#000"></div><div class="px" style="left:305px;top:27px;width:5px;background:#000"></div><div class="px" style="left:306px;top:28px;width:3px;background:#000"></div><div class="px" style="left:307px;top:29px;width:1px;background:#000"></div><div class="lb" style="left:135px;top:19.93px;font-size:13.33px;color:#000;">Sinus</div><div class="lb" style="left:13px;top:55.93px;font-size:13.33px;color:#000;">Frequency/TC[µs]:</div><div class="sk" style="left:131px;top:51px;width:87px;height:25px;"><div class="ski" style="background:#fff"></div></div><div class="lb" style="left:134px;top:55.93px;font-size:13.33px;color:#000;">43100</div><div class="rs" style="left:223px;top:49px;width:21px;height:14px;"><div class="rsi"></div></div><div class="rs" style="left:223px;top:63px;width:21px;height:14px;"><div class="rsi"></div></div><div class="px" style="left:232px;top:53px;width:1px;background:#000"></div><div class="px" style="left:231px;top:54px;width:3px;background:#000"></div><div class="px" style="left:230px;top:55px;width:5px;background:#000"></div><div class="px" style="left:230px;top:70px;width:5px;background:#000"></div><div class="px" style="left:231px;top:71px;width:3px;background:#000"></div><div class="px" style="left:232px;top:72px;width:1px;background:#000"></div><div class="rs" style="left:259px;top:49px;width:38px;height:28px;"><div class="rsi"></div></div><div class="lb" style="left:259px;top:53.0px;width:38px;text-align:center;font-size:13.33px;color:#000;line-height:17px">H</div><div class="sk" style="left:13px;top:88px;width:16px;height:16px;"><div class="ski" style="background:#fff"></div></div><div class="lb" style="left:34px;top:87.93px;font-size:13.33px;color:#000;">FM</div><div class="sk" style="left:131px;top:83px;width:87px;height:26px;"><div class="ski" style="background:#f0f0f0"></div></div><div class="lb" style="left:134px;top:87.93px;font-size:13.33px;color:#8d8d8d;">43200</div><div class="rs" style="left:223px;top:81px;width:21px;height:14px;"><div class="rsi"></div></div><div class="rs" style="left:223px;top:95px;width:21px;height:14px;"><div class="rsi"></div></div><div class="px" style="left:232px;top:85px;width:1px;background:#a0a0a0"></div><div class="px" style="left:231px;top:86px;width:3px;background:#a0a0a0"></div><div class="px" style="left:230px;top:87px;width:5px;background:#a0a0a0"></div><div class="px" style="left:230px;top:102px;width:5px;background:#a0a0a0"></div><div class="px" style="left:231px;top:103px;width:3px;background:#a0a0a0"></div><div class="px" style="left:232px;top:104px;width:1px;background:#a0a0a0"></div><div class="rs" style="left:259px;top:81px;width:38px;height:28px;"><div class="rsi"></div></div><div class="lb" style="left:259px;top:85.0px;width:38px;text-align:center;font-size:13.33px;color:#a0a0a0;line-height:17px">H</div><div class="lb" style="left:15px;top:123.93px;font-size:13.33px;color:#000;">Amplitude/PWM:</div><div class="sk" style="left:131px;top:119px;width:70px;height:25px;"><div class="ski" style="background:#fff"></div></div><div class="lb" style="left:134px;top:123.93px;font-size:13.33px;color:#000;">1</div><div class="rs" style="left:207px;top:117px;width:21px;height:14px;"><div class="rsi"></div></div><div class="rs" style="left:207px;top:131px;width:21px;height:14px;"><div class="rsi"></div></div><div class="px" style="left:216px;top:121px;width:1px;background:#000"></div><div class="px" style="left:215px;top:122px;width:3px;background:#000"></div><div class="px" style="left:214px;top:123px;width:5px;background:#000"></div><div class="px" style="left:214px;top:138px;width:5px;background:#000"></div><div class="px" style="left:215px;top:139px;width:3px;background:#000"></div><div class="px" style="left:216px;top:140px;width:1px;background:#000"></div><div class="rs" style="left:237px;top:117px;width:38px;height:28px;"><div class="rsi"></div></div><div class="lb" style="left:237px;top:121.0px;width:38px;text-align:center;font-size:13.33px;color:#000;line-height:17px">0</div><div class="rs" style="left:283px;top:117px;width:38px;height:28px;"><div class="rsi"></div></div><div class="lb" style="left:283px;top:121.0px;width:38px;text-align:center;font-size:13.33px;color:#000;line-height:17px">1</div><div class="lb" style="left:15px;top:155.93px;font-size:13.33px;color:#000;">Phase/Phi[µs]:</div><div class="sk" style="left:131px;top:151px;width:70px;height:25px;"><div class="ski" style="background:#fff"></div></div><div class="lb" style="left:134px;top:155.93px;font-size:13.33px;color:#000;">0</div><div class="rs" style="left:207px;top:149px;width:21px;height:14px;"><div class="rsi"></div></div><div class="rs" style="left:207px;top:163px;width:21px;height:14px;"><div class="rsi"></div></div><div class="px" style="left:216px;top:153px;width:1px;background:#000"></div><div class="px" style="left:215px;top:154px;width:3px;background:#000"></div><div class="px" style="left:214px;top:155px;width:5px;background:#000"></div><div class="px" style="left:214px;top:170px;width:5px;background:#000"></div><div class="px" style="left:215px;top:171px;width:3px;background:#000"></div><div class="px" style="left:216px;top:172px;width:1px;background:#000"></div><div class="rs" style="left:237px;top:149px;width:38px;height:28px;"><div class="rsi"></div></div><div class="lb" style="left:237px;top:153.0px;width:38px;text-align:center;font-size:13.33px;color:#000;line-height:17px">+90</div><div class="rs" style="left:283px;top:149px;width:38px;height:28px;"><div class="rsi"></div></div><div class="lb" style="left:283px;top:153.0px;width:38px;text-align:center;font-size:13.33px;color:#000;line-height:17px">+180</div><div class="lb" style="left:15px;top:188.93px;font-size:13.33px;color:#000;">P1</div><div class="sk" style="left:43px;top:185px;width:86px;height:25px;"><div class="ski" style="background:#fff"></div></div><div class="lb" style="left:46px;top:187.93px;font-size:13.33px;color:#000;">0</div><div class="rs" style="left:137px;top:183px;width:21px;height:14px;"><div class="rsi"></div></div><div class="rs" style="left:137px;top:197px;width:21px;height:14px;"><div class="rsi"></div></div><div class="px" style="left:146px;top:187px;width:1px;background:#000"></div><div class="px" style="left:145px;top:188px;width:3px;background:#000"></div><div class="px" style="left:144px;top:189px;width:5px;background:#000"></div><div class="px" style="left:144px;top:204px;width:5px;background:#000"></div><div class="px" style="left:145px;top:205px;width:3px;background:#000"></div><div class="px" style="left:146px;top:206px;width:1px;background:#000"></div><div class="lb" style="left:173px;top:188.93px;font-size:13.33px;color:#000;">P2</div><div class="sk" style="left:203px;top:185px;width:86px;height:25px;"><div class="ski" style="background:#fff"></div></div><div class="lb" style="left:206px;top:187.93px;font-size:13.33px;color:#000;">0</div><div class="rs" style="left:297px;top:183px;width:21px;height:14px;"><div class="rsi"></div></div><div class="rs" style="left:297px;top:197px;width:21px;height:14px;"><div class="rsi"></div></div><div class="px" style="left:306px;top:187px;width:1px;background:#000"></div><div class="px" style="left:305px;top:188px;width:3px;background:#000"></div><div class="px" style="left:304px;top:189px;width:5px;background:#000"></div><div class="px" style="left:304px;top:204px;width:5px;background:#000"></div><div class="px" style="left:305px;top:205px;width:3px;background:#000"></div><div class="px" style="left:306px;top:206px;width:1px;background:#000"></div></div></div><div class="win" style="left:351px;top:641px;width:358px;height:256px;"><svg class="glass" width="358" height="246" viewBox="0 0 358 246"><defs><clipPath id="cg361"><path d="M0 7 Q0 0 7 0 H351 Q358 0 358 7 V246 H0 Z M9 36 H349 V246 H9 Z" clip-rule="evenodd"/></clipPath><filter id="fg361" color-interpolation-filters="sRGB" filterUnits="userSpaceOnUse" x="-50" y="-50" width="458" height="346"><feGaussianBlur stdDeviation="3.2" edgeMode="duplicate"/><feColorMatrix type="matrix" values="0.80 0 0 0 0.196  0 0.60 0 0 0.282  0 0 0.72 0 0.282  0 0 0 1 0"/></filter></defs><g clip-path="url(#cg361)"><g filter="url(#fg361)"><g transform="translate(-351,-641)"><rect x="311" y="601" width="438" height="326" fill="#008000"/><use href="#grid"/><use href="#circ"/></g></g></g></svg><div class="frame"></div><div class="glow" style="left:2px;top:6px;width:97px;height:26px"></div><div class="title">Generator-1</div><div class="close"><svg width="20" height="18" viewBox="0 0 20 18"><path d="M2.7 1.6H7L9.4 4.3L11.8 1.6H16.3L11.6 8L16.3 13.9H11.8L9.4 11.2L7 13.9H2.7L7.4 8Z" fill="#f2f2f2" stroke="#3a3a4c" stroke-width="1.3" stroke-linejoin="round"/></svg></div><div class="client"><div class="sk" style="left:13px;top:15px;width:107px;height:23px;"><div class="ski" style="background:#fff"></div></div><div class="rs" style="left:98px;top:17px;width:21px;height:20px;"><div class="rsi"></div></div><div class="px" style="left:103px;top:25px;width:9px;background:#000"></div><div class="px" style="left:104px;top:26px;width:7px;background:#000"></div><div class="px" style="left:105px;top:27px;width:5px;background:#000"></div><div class="px" style="left:106px;top:28px;width:3px;background:#000"></div><div class="px" style="left:107px;top:29px;width:1px;background:#000"></div><div class="lb" style="left:17px;top:19.93px;font-size:13.33px;color:#000;">None</div><div class="sk" style="left:131px;top:15px;width:189px;height:23px;"><div class="ski" style="background:#fff"></div></div><div class="rs" style="left:298px;top:17px;width:21px;height:20px;"><div class="rsi"></div></div><div class="px" style="left:303px;top:25px;width:9px;background:#000"></div><div class="px" style="left:304px;top:26px;width:7px;background:#000"></div><div class="px" style="left:305px;top:27px;width:5px;background:#000"></div><div class="px" style="left:306px;top:28px;width:3px;background:#000"></div><div class="px" style="left:307px;top:29px;width:1px;background:#000"></div><div class="lb" style="left:135px;top:19.93px;font-size:13.33px;color:#000;">Sinus</div><div class="lb" style="left:13px;top:55.93px;font-size:13.33px;color:#000;">Frequency/TC[µs]:</div><div class="sk" style="left:131px;top:51px;width:87px;height:25px;"><div class="ski" style="background:#fff"></div></div><div class="lb" style="left:134px;top:55.93px;font-size:13.33px;color:#000;">43100</div><div class="rs" style="left:223px;top:49px;width:21px;height:14px;"><div class="rsi"></div></div><div class="rs" style="left:223px;top:63px;width:21px;height:14px;"><div class="rsi"></div></div><div class="px" style="left:232px;top:53px;width:1px;background:#000"></div><div class="px" style="left:231px;top:54px;width:3px;background:#000"></div><div class="px" style="left:230px;top:55px;width:5px;background:#000"></div><div class="px" style="left:230px;top:70px;width:5px;background:#000"></div><div class="px" style="left:231px;top:71px;width:3px;background:#000"></div><div class="px" style="left:232px;top:72px;width:1px;background:#000"></div><div class="rs" style="left:259px;top:49px;width:38px;height:28px;"><div class="rsi"></div></div><div class="lb" style="left:259px;top:53.0px;width:38px;text-align:center;font-size:13.33px;color:#000;line-height:17px">H</div><div class="sk" style="left:13px;top:88px;width:16px;height:16px;"><div class="ski" style="background:#fff"></div></div><div class="lb" style="left:34px;top:87.93px;font-size:13.33px;color:#000;">FM</div><div class="sk" style="left:131px;top:83px;width:87px;height:26px;"><div class="ski" style="background:#f0f0f0"></div></div><div class="lb" style="left:134px;top:87.93px;font-size:13.33px;color:#8d8d8d;">43200</div><div class="rs" style="left:223px;top:81px;width:21px;height:14px;"><div class="rsi"></div></div><div class="rs" style="left:223px;top:95px;width:21px;height:14px;"><div class="rsi"></div></div><div class="px" style="left:232px;top:85px;width:1px;background:#a0a0a0"></div><div class="px" style="left:231px;top:86px;width:3px;background:#a0a0a0"></div><div class="px" style="left:230px;top:87px;width:5px;background:#a0a0a0"></div><div class="px" style="left:230px;top:102px;width:5px;background:#a0a0a0"></div><div class="px" style="left:231px;top:103px;width:3px;background:#a0a0a0"></div><div class="px" style="left:232px;top:104px;width:1px;background:#a0a0a0"></div><div class="rs" style="left:259px;top:81px;width:38px;height:28px;"><div class="rsi"></div></div><div class="lb" style="left:259px;top:85.0px;width:38px;text-align:center;font-size:13.33px;color:#a0a0a0;line-height:17px">H</div><div class="lb" style="left:15px;top:123.93px;font-size:13.33px;color:#000;">Amplitude/PWM:</div><div class="sk" style="left:131px;top:119px;width:70px;height:25px;"><div class="ski" style="background:#fff"></div></div><div class="lb" style="left:134px;top:123.93px;font-size:13.33px;color:#000;">1</div><div class="rs" style="left:207px;top:117px;width:21px;height:14px;"><div class="rsi"></div></div><div class="rs" style="left:207px;top:131px;width:21px;height:14px;"><div class="rsi"></div></div><div class="px" style="left:216px;top:121px;width:1px;background:#000"></div><div class="px" style="left:215px;top:122px;width:3px;background:#000"></div><div class="px" style="left:214px;top:123px;width:5px;background:#000"></div><div class="px" style="left:214px;top:138px;width:5px;background:#000"></div><div class="px" style="left:215px;top:139px;width:3px;background:#000"></div><div class="px" style="left:216px;top:140px;width:1px;background:#000"></div><div class="rs" style="left:237px;top:117px;width:38px;height:28px;"><div class="rsi"></div></div><div class="lb" style="left:237px;top:121.0px;width:38px;text-align:center;font-size:13.33px;color:#000;line-height:17px">0</div><div class="rs" style="left:283px;top:117px;width:38px;height:28px;"><div class="rsi"></div></div><div class="lb" style="left:283px;top:121.0px;width:38px;text-align:center;font-size:13.33px;color:#000;line-height:17px">1</div><div class="lb" style="left:15px;top:155.93px;font-size:13.33px;color:#000;">Phase/Phi[µs]:</div><div class="sk" style="left:131px;top:151px;width:70px;height:25px;"><div class="ski" style="background:#fff"></div></div><div class="lb" style="left:134px;top:155.93px;font-size:13.33px;color:#000;">0</div><div class="rs" style="left:207px;top:149px;width:21px;height:14px;"><div class="rsi"></div></div><div class="rs" style="left:207px;top:163px;width:21px;height:14px;"><div class="rsi"></div></div><div class="px" style="left:216px;top:153px;width:1px;background:#000"></div><div class="px" style="left:215px;top:154px;width:3px;background:#000"></div><div class="px" style="left:214px;top:155px;width:5px;background:#000"></div><div class="px" style="left:214px;top:170px;width:5px;background:#000"></div><div class="px" style="left:215px;top:171px;width:3px;background:#000"></div><div class="px" style="left:216px;top:172px;width:1px;background:#000"></div><div class="rs" style="left:237px;top:149px;width:38px;height:28px;"><div class="rsi"></div></div><div class="lb" style="left:237px;top:153.0px;width:38px;text-align:center;font-size:13.33px;color:#000;line-height:17px">+90</div><div class="rs" style="left:283px;top:149px;width:38px;height:28px;"><div class="rsi"></div></div><div class="lb" style="left:283px;top:153.0px;width:38px;text-align:center;font-size:13.33px;color:#000;line-height:17px">+180</div><div class="lb" style="left:15px;top:188.93px;font-size:13.33px;color:#000;">P1</div><div class="sk" style="left:43px;top:185px;width:86px;height:25px;"><div class="ski" style="background:#fff"></div></div><div class="lb" style="left:46px;top:187.93px;font-size:13.33px;color:#000;">0</div><div class="rs" style="left:137px;top:183px;width:21px;height:14px;"><div class="rsi"></div></div><div class="rs" style="left:137px;top:197px;width:21px;height:14px;"><div class="rsi"></div></div><div class="px" style="left:146px;top:187px;width:1px;background:#000"></div><div class="px" style="left:145px;top:188px;width:3px;background:#000"></div><div class="px" style="left:144px;top:189px;width:5px;background:#000"></div><div class="px" style="left:144px;top:204px;width:5px;background:#000"></div><div class="px" style="left:145px;top:205px;width:3px;background:#000"></div><div class="px" style="left:146px;top:206px;width:1px;background:#000"></div><div class="lb" style="left:173px;top:188.93px;font-size:13.33px;color:#000;">P2</div><div class="sk" style="left:203px;top:185px;width:86px;height:25px;"><div class="ski" style="background:#fff"></div></div><div class="lb" style="left:206px;top:187.93px;font-size:13.33px;color:#000;">0</div><div class="rs" style="left:297px;top:183px;width:21px;height:14px;"><div class="rsi"></div></div><div class="rs" style="left:297px;top:197px;width:21px;height:14px;"><div class="rsi"></div></div><div class="px" style="left:306px;top:187px;width:1px;background:#000"></div><div class="px" style="left:305px;top:188px;width:3px;background:#000"></div><div class="px" style="left:304px;top:189px;width:5px;background:#000"></div><div class="px" style="left:304px;top:204px;width:5px;background:#000"></div><div class="px" style="left:305px;top:205px;width:3px;background:#000"></div><div class="px" style="left:306px;top:206px;width:1px;background:#000"></div></div></div><div class="win" style="left:710px;top:643px;width:358px;height:254px;"><svg class="glass" width="358" height="244" viewBox="0 0 358 244"><defs><clipPath id="cg720"><path d="M0 7 Q0 0 7 0 H351 Q358 0 358 7 V244 H0 Z M9 36 H349 V244 H9 Z" clip-rule="evenodd"/></clipPath><filter id="fg720" color-interpolation-filters="sRGB" filterUnits="userSpaceOnUse" x="-50" y="-50" width="458" height="344"><feGaussianBlur stdDeviation="3.2" edgeMode="duplicate"/><feColorMatrix type="matrix" values="0.80 0 0 0 0.196  0 0.60 0 0 0.282  0 0 0.72 0 0.282  0 0 0 1 0"/></filter></defs><g clip-path="url(#cg720)"><g filter="url(#fg720)"><g transform="translate(-710,-643)"><rect x="670" y="603" width="438" height="324" fill="#008000"/><use href="#grid"/><use href="#circ"/></g></g></g></svg><div class="frame"></div><div class="glow" style="left:2px;top:6px;width:97px;height:26px"></div><div class="title">Generator-2</div><div class="close"><svg width="20" height="18" viewBox="0 0 20 18"><path d="M2.7 1.6H7L9.4 4.3L11.8 1.6H16.3L11.6 8L16.3 13.9H11.8L9.4 11.2L7 13.9H2.7L7.4 8Z" fill="#f2f2f2" stroke="#3a3a4c" stroke-width="1.3" stroke-linejoin="round"/></svg></div><div class="client"><div class="sk" style="left:13px;top:15px;width:107px;height:23px;"><div class="ski" style="background:#fff"></div></div><div class="rs" style="left:98px;top:17px;width:21px;height:20px;"><div class="rsi"></div></div><div class="px" style="left:103px;top:25px;width:9px;background:#000"></div><div class="px" style="left:104px;top:26px;width:7px;background:#000"></div><div class="px" style="left:105px;top:27px;width:5px;background:#000"></div><div class="px" style="left:106px;top:28px;width:3px;background:#000"></div><div class="px" style="left:107px;top:29px;width:1px;background:#000"></div><div class="lb" style="left:17px;top:19.93px;font-size:13.33px;color:#000;">None</div><div class="sk" style="left:131px;top:15px;width:189px;height:23px;"><div class="ski" style="background:#fff"></div></div><div class="rs" style="left:298px;top:17px;width:21px;height:20px;"><div class="rsi"></div></div><div class="px" style="left:303px;top:25px;width:9px;background:#000"></div><div class="px" style="left:304px;top:26px;width:7px;background:#000"></div><div class="px" style="left:305px;top:27px;width:5px;background:#000"></div><div class="px" style="left:306px;top:28px;width:3px;background:#000"></div><div class="px" style="left:307px;top:29px;width:1px;background:#000"></div><div class="lb" style="left:135px;top:19.93px;font-size:13.33px;color:#000;">Sinus</div><div class="lb" style="left:13px;top:55.93px;font-size:13.33px;color:#000;">Frequency/TC[µs]:</div><div class="sk" style="left:131px;top:51px;width:87px;height:25px;"><div class="ski" style="background:#fff"></div></div><div class="lb" style="left:134px;top:55.93px;font-size:13.33px;color:#000;">43100</div><div class="rs" style="left:223px;top:49px;width:21px;height:14px;"><div class="rsi"></div></div><div class="rs" style="left:223px;top:63px;width:21px;height:14px;"><div class="rsi"></div></div><div class="px" style="left:232px;top:53px;width:1px;background:#000"></div><div class="px" style="left:231px;top:54px;width:3px;background:#000"></div><div class="px" style="left:230px;top:55px;width:5px;background:#000"></div><div class="px" style="left:230px;top:70px;width:5px;background:#000"></div><div class="px" style="left:231px;top:71px;width:3px;background:#000"></div><div class="px" style="left:232px;top:72px;width:1px;background:#000"></div><div class="rs" style="left:259px;top:49px;width:38px;height:28px;"><div class="rsi"></div></div><div class="lb" style="left:259px;top:53.0px;width:38px;text-align:center;font-size:13.33px;color:#000;line-height:17px">H</div><div class="sk" style="left:13px;top:88px;width:16px;height:16px;"><div class="ski" style="background:#fff"></div></div><div class="lb" style="left:34px;top:87.93px;font-size:13.33px;color:#000;">FM</div><div class="sk" style="left:131px;top:83px;width:87px;height:26px;"><div class="ski" style="background:#f0f0f0"></div></div><div class="lb" style="left:134px;top:87.93px;font-size:13.33px;color:#8d8d8d;">43200</div><div class="rs" style="left:223px;top:81px;width:21px;height:14px;"><div class="rsi"></div></div><div class="rs" style="left:223px;top:95px;width:21px;height:14px;"><div class="rsi"></div></div><div class="px" style="left:232px;top:85px;width:1px;background:#a0a0a0"></div><div class="px" style="left:231px;top:86px;width:3px;background:#a0a0a0"></div><div class="px" style="left:230px;top:87px;width:5px;background:#a0a0a0"></div><div class="px" style="left:230px;top:102px;width:5px;background:#a0a0a0"></div><div class="px" style="left:231px;top:103px;width:3px;background:#a0a0a0"></div><div class="px" style="left:232px;top:104px;width:1px;background:#a0a0a0"></div><div class="rs" style="left:259px;top:81px;width:38px;height:28px;"><div class="rsi"></div></div><div class="lb" style="left:259px;top:85.0px;width:38px;text-align:center;font-size:13.33px;color:#a0a0a0;line-height:17px">H</div><div class="lb" style="left:15px;top:123.93px;font-size:13.33px;color:#000;">Amplitude/PWM:</div><div class="sk" style="left:131px;top:119px;width:70px;height:25px;"><div class="ski" style="background:#fff"></div></div><div class="lb" style="left:134px;top:123.93px;font-size:13.33px;color:#000;">1</div><div class="rs" style="left:207px;top:117px;width:21px;height:14px;"><div class="rsi"></div></div><div class="rs" style="left:207px;top:131px;width:21px;height:14px;"><div class="rsi"></div></div><div class="px" style="left:216px;top:121px;width:1px;background:#000"></div><div class="px" style="left:215px;top:122px;width:3px;background:#000"></div><div class="px" style="left:214px;top:123px;width:5px;background:#000"></div><div class="px" style="left:214px;top:138px;width:5px;background:#000"></div><div class="px" style="left:215px;top:139px;width:3px;background:#000"></div><div class="px" style="left:216px;top:140px;width:1px;background:#000"></div><div class="rs" style="left:237px;top:117px;width:38px;height:28px;"><div class="rsi"></div></div><div class="lb" style="left:237px;top:121.0px;width:38px;text-align:center;font-size:13.33px;color:#000;line-height:17px">0</div><div class="rs" style="left:283px;top:117px;width:38px;height:28px;"><div class="rsi"></div></div><div class="lb" style="left:283px;top:121.0px;width:38px;text-align:center;font-size:13.33px;color:#000;line-height:17px">1</div><div class="lb" style="left:15px;top:155.93px;font-size:13.33px;color:#000;">Phase/Phi[µs]:</div><div class="sk" style="left:131px;top:151px;width:70px;height:25px;"><div class="ski" style="background:#fff"></div></div><div class="lb" style="left:134px;top:155.93px;font-size:13.33px;color:#000;">0</div><div class="rs" style="left:207px;top:149px;width:21px;height:14px;"><div class="rsi"></div></div><div class="rs" style="left:207px;top:163px;width:21px;height:14px;"><div class="rsi"></div></div><div class="px" style="left:216px;top:153px;width:1px;background:#000"></div><div class="px" style="left:215px;top:154px;width:3px;background:#000"></div><div class="px" style="left:214px;top:155px;width:5px;background:#000"></div><div class="px" style="left:214px;top:170px;width:5px;background:#000"></div><div class="px" style="left:215px;top:171px;width:3px;background:#000"></div><div class="px" style="left:216px;top:172px;width:1px;background:#000"></div><div class="rs" style="left:237px;top:149px;width:38px;height:28px;"><div class="rsi"></div></div><div class="lb" style="left:237px;top:153.0px;width:38px;text-align:center;font-size:13.33px;color:#000;line-height:17px">+90</div><div class="rs" style="left:283px;top:149px;width:38px;height:28px;"><div class="rsi"></div></div><div class="lb" style="left:283px;top:153.0px;width:38px;text-align:center;font-size:13.33px;color:#000;line-height:17px">+180</div><div class="lb" style="left:15px;top:188.93px;font-size:13.33px;color:#000;">P1</div><div class="sk" style="left:43px;top:185px;width:86px;height:25px;"><div class="ski" style="background:#fff"></div></div><div class="lb" style="left:46px;top:187.93px;font-size:13.33px;color:#000;">0</div><div class="rs" style="left:137px;top:183px;width:21px;height:14px;"><div class="rsi"></div></div><div class="rs" style="left:137px;top:197px;width:21px;height:14px;"><div class="rsi"></div></div><div class="px" style="left:146px;top:187px;width:1px;background:#000"></div><div class="px" style="left:145px;top:188px;width:3px;background:#000"></div><div class="px" style="left:144px;top:189px;width:5px;background:#000"></div><div class="px" style="left:144px;top:204px;width:5px;background:#000"></div><div class="px" style="left:145px;top:205px;width:3px;background:#000"></div><div class="px" style="left:146px;top:206px;width:1px;background:#000"></div><div class="lb" style="left:173px;top:188.93px;font-size:13.33px;color:#000;">P2</div><div class="sk" style="left:203px;top:185px;width:86px;height:25px;"><div class="ski" style="background:#fff"></div></div><div class="lb" style="left:206px;top:187.93px;font-size:13.33px;color:#000;">0</div><div class="rs" style="left:297px;top:183px;width:21px;height:14px;"><div class="rsi"></div></div><div class="rs" style="left:297px;top:197px;width:21px;height:14px;"><div class="rsi"></div></div><div class="px" style="left:306px;top:187px;width:1px;background:#000"></div><div class="px" style="left:305px;top:188px;width:3px;background:#000"></div><div class="px" style="left:304px;top:189px;width:5px;background:#000"></div><div class="px" style="left:304px;top:204px;width:5px;background:#000"></div><div class="px" style="left:305px;top:205px;width:3px;background:#000"></div><div class="px" style="left:306px;top:206px;width:1px;background:#000"></div></div></div></body></html>
